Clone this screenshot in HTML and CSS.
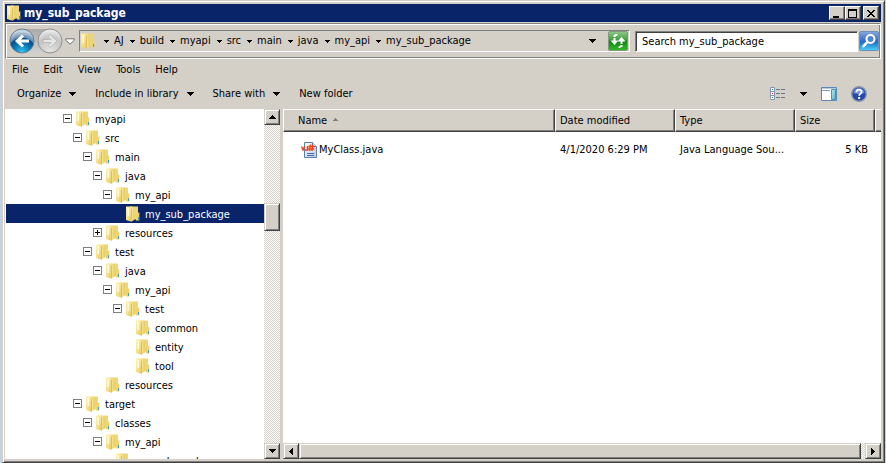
FILE: index.html
```html
<!DOCTYPE html>
<html lang="en">
<head>
<meta charset="utf-8">
<title>my_sub_package</title>
<link rel="stylesheet" href="styles.css">
</head>
<body>
<svg class="defs" aria-hidden="true">
  <defs>
    <linearGradient id="gold" x1="0" y1="0" x2="1" y2="1">
      <stop offset="0" stop-color="#fff3b0"/><stop offset=".5" stop-color="#f5e08a"/><stop offset="1" stop-color="#e3c352"/>
    </linearGradient>
    <linearGradient id="goldDark" x1="0" y1="0" x2="1" y2="0">
      <stop offset="0" stop-color="#cfae45"/><stop offset=".4" stop-color="#f3e08a"/><stop offset="1" stop-color="#e6cb62"/>
    </linearGradient>
    <symbol id="folder" viewBox="0 0 14 16">
      <path d="M4 .5h8v13H4z" fill="#ecd679"/>
      <path d="M10 7h2l1.300-1v8.500H10z" fill="#ecd46f"/>
      <path d="M0 .5h6.500v13.500L4.500 15.500 0 14z" fill="url(#gold)"/>
      <path d="M5 3L8.500 1v12.500L5 16z" fill="url(#goldDark)"/>
      <path d="M1.500 2H3v8H1.500z" fill="#fffbe0"/>
      <path d="M12 11h1v3h-1z" fill="#4a9fb0"/>
    </symbol>
    <radialGradient id="blueBall" cx=".5" cy=".95" r=".85">
      <stop offset="0" stop-color="#35c5ee"/><stop offset=".4" stop-color="#0878b4"/><stop offset=".68" stop-color="#0b4c83"/><stop offset=".7" stop-color="#5a87ad"/><stop offset="1" stop-color="#c7d5e0"/>
    </radialGradient>
    <radialGradient id="greyBall" cx=".5" cy=".9" r=".85">
      <stop offset="0" stop-color="#e2e2e0"/><stop offset=".65" stop-color="#c5c5c4"/><stop offset="1" stop-color="#ececec"/>
    </radialGradient>
    <linearGradient id="green" x1="0" y1="0" x2="0" y2="1">
      <stop offset="0" stop-color="#8fc98c"/><stop offset=".45" stop-color="#3f9c3e"/><stop offset=".5" stop-color="#0c8410"/><stop offset="1" stop-color="#37bb27"/>
    </linearGradient>
    <linearGradient id="searchBlue" x1="0" y1="0" x2="0" y2="1">
      <stop offset="0" stop-color="#86a9df"/><stop offset=".45" stop-color="#3b70cc"/><stop offset=".55" stop-color="#1c6dcf"/><stop offset="1" stop-color="#48d4f6"/>
    </linearGradient>
    <linearGradient id="pane" x1="0" y1="0" x2="1" y2="1">
      <stop offset="0" stop-color="#b9edf5"/><stop offset="1" stop-color="#4fb2cc"/>
    </linearGradient>
    <linearGradient id="page" x1="0" y1="0" x2="1" y2="1">
      <stop offset="0" stop-color="#fff"/><stop offset="1" stop-color="#b4c8e6"/>
    </linearGradient>
    <symbol id="down" viewBox="0 0 7 4"><path d="M0 0h7v1H6v1H5v1H4v1H3V3H2V2H1V1H0z"/></symbol>
    <symbol id="down-small" viewBox="0 0 5 3"><path d="M0 0h5v1H4v1H3v1H2V2H1V1H0z"/></symbol>
    <symbol id="left" viewBox="0 0 4 7"><path d="M4 0v7H3V6H2V5H1V4H0V3h1V2h1V1h1V0z"/></symbol>
  </defs>
</svg>
<main class="window">
  <header class="titlebar">
    <svg class="folder"><use href="#folder"/></svg>
    <h1 class="title">my_sub_package</h1>
    <div class="controls">
      <button class="caption" aria-label="Minimize"><svg viewBox="0 0 10 9"><path d="M1 7h6v2H1z"/></svg></button>
      <button class="caption" aria-label="Maximize"><svg viewBox="0 0 10 9"><path fill-rule="evenodd" d="M0 0h9v9H0zM1 2v6h7V2z"/></svg></button>
      <button class="caption close" aria-label="Close"><svg viewBox="0 0 10 9"><path d="M1 1h2v1h1v1h2V2h1V1h2v1H8v1H7v1H6v1h1v1h1v1h1v1H7V7H6V6H4v1H3v1H1V7h1V6h1V5h1V4H3V3H2V2H1z"/></svg></button>
    </div>
  </header>

  <nav class="navbar" aria-label="Address">
    <div class="travel">
      <button class="round" aria-label="Back"><svg viewBox="0 0 26 26"><circle cx="13" cy="13" r="12" fill="url(#blueBall)" stroke="#6d7d8b"/><path d="M13 6.500L6 13l7 6.500 2-2-3-3h8v-3h-8l3-3z" fill="#fff"/></svg></button>
      <button class="round" aria-label="Forward"><svg viewBox="0 0 26 26"><circle cx="13" cy="13" r="12" fill="url(#greyBall)" stroke="#8f8f8f"/><path d="M13 6.500l7 6.500-7 6.500-2-2 3-3H6v-3h8l-3-3z" fill="#e6e6e4" stroke="#aaa" stroke-width=".7"/></svg></button>
      <button class="history" aria-label="Recent locations"><svg viewBox="0 0 10 7"><path d="M.8.8h8.400v1.400L5 6.200.8 2.200z" fill="#fff" stroke="#6f6f6f"/></svg></button>
    </div>
    <div class="address">
      <svg class="folder"><use href="#folder"/></svg>
      <ol class="crumbs">
        <li><svg class="tick"><use href="#down-small"/></svg><a href="#">AJ</a></li>
        <li><svg class="tick"><use href="#down-small"/></svg><a href="#">build</a></li>
        <li><svg class="tick"><use href="#down-small"/></svg><a href="#">myapi</a></li>
        <li><svg class="tick"><use href="#down-small"/></svg><a href="#">src</a></li>
        <li><svg class="tick"><use href="#down-small"/></svg><a href="#">main</a></li>
        <li><svg class="tick"><use href="#down-small"/></svg><a href="#">java</a></li>
        <li><svg class="tick"><use href="#down-small"/></svg><a href="#">my_api</a></li>
        <li><svg class="tick"><use href="#down-small"/></svg><a href="#">my_sub_package</a></li>
      </ol>
      <button class="plain" aria-label="Previous locations"><svg class="arrow"><use href="#down"/></svg></button>
      <button class="square" aria-label="Refresh"><svg viewBox="0 0 20 20"><rect x=".5" y=".5" width="19" height="19" rx="1.500" fill="url(#green)" stroke="#7f9a7c"/><path d="M6.500 4v2M6.500 7v4.500M13.500 16v-2M13.500 13V9.500" stroke="#fff" stroke-width="2"/><path d="M2.500 9.500h8l-4 4.500zM9.500 10.500h8l-4-4.500z" fill="#fff"/><path d="M6.500 5q1-1.500 3-1M13.500 15q-1 1.500-3 1" fill="none" stroke="#fff" stroke-width="1.500"/></svg></button>
    </div>
    <form class="search" role="search">
      <input type="text" aria-label="Search" placeholder="Search my_sub_package">
      <button class="square" type="button" aria-label="Search"><svg viewBox="0 0 20 20"><rect x=".5" y=".5" width="19" height="19" rx="1.500" fill="url(#searchBlue)" stroke="#6f8fbd"/><circle cx="11.500" cy="8" r="4" fill="#4b83d6" stroke="#fff" stroke-width="2"/><path d="M8.500 11L4.500 15.200" stroke="#fff" stroke-width="2.600" stroke-linecap="round"/></svg></button>
    </form>
  </nav>

  <div class="menubar">
    <button>File</button><button>Edit</button><button>View</button><button>Tools</button><button>Help</button>
  </div>

  <div class="toolbar">
    <button>Organize<svg class="arrow"><use href="#down"/></svg></button>
    <button>Include in library<svg class="arrow"><use href="#down"/></svg></button>
    <button>Share with<svg class="arrow"><use href="#down"/></svg></button>
    <button>New folder</button>
    <div class="tools">
      <button aria-label="Change your view"><svg class="view" viewBox="0 0 16 14"><g fill="#fff" stroke="#8295ad"><path d="M.5.500h4v4h-4zM.5 4.500h4v4h-4zM.5 8.500h4v4h-4z"/></g><path d="M6 2h4v1H6zM11 2h4v1h-4zM6 6h4v1H6zM11 6h4v1h-4zM6 10h4v1H6zM11 10h4v1h-4z" fill="#66788e"/><path d="M2 2h1v1H2z" fill="#3a6ea5"/><path d="M2 6h1v1H2z" fill="#d02020"/><path d="M2 10h1v1H2z" fill="#3a8a5a"/></svg></button>
      <button aria-label="More view options"><svg class="arrow"><use href="#down"/></svg></button>
      <button aria-label="Preview pane"><svg class="preview" viewBox="0 0 16 14"><path d="M.5.500h15v13H.5z" fill="#fff" stroke="#5c87b2"/><path d="M1 1h14v1H1z" fill="#b8cbdf"/><path d="M1 3h8v1H1z" fill="#7b9cbc"/><path d="M10.500 2.500h4v10h-4z" fill="url(#pane)" stroke="#4a93b0"/></svg></button>
      <button aria-label="Help"><svg class="help" viewBox="0 0 16 16"><circle cx="8" cy="8" r="7.300" fill="#2449ad" stroke="#8c96a8" stroke-width="1.400"/><path d="M2.300 7a5.800 5.800 0 0 1 11.400 0Q8 9 2.300 7z" fill="#6f8fd8"/><path d="M5.500 6.200C5.500 2.800 10.600 3 10.500 6c0 1.800-2.400 1.900-2.400 3.800" fill="none" stroke="#fff" stroke-width="1.800"/><path d="M7.100 11h2v2h-2z" fill="#fff"/></svg></button>
    </div>
  </div>

  <div class="panes">
    <aside class="sidebar">
      <ul class="tree">
        <li class="d0"><button class="toggle" aria-label="Collapse"></button><svg class="folder"><use href="#folder"/></svg><span>myapi</span></li>
        <li class="d1"><button class="toggle" aria-label="Collapse"></button><svg class="folder"><use href="#folder"/></svg><span>src</span></li>
        <li class="d2"><button class="toggle" aria-label="Collapse"></button><svg class="folder"><use href="#folder"/></svg><span>main</span></li>
        <li class="d3"><button class="toggle" aria-label="Collapse"></button><svg class="folder"><use href="#folder"/></svg><span>java</span></li>
        <li class="d4"><button class="toggle" aria-label="Collapse"></button><svg class="folder"><use href="#folder"/></svg><span>my_api</span></li>
        <li class="d5 selected"><i class="leaf"></i><svg class="folder"><use href="#folder"/></svg><span>my_sub_package</span></li>
        <li class="d3"><button class="toggle plus" aria-label="Expand"></button><svg class="folder"><use href="#folder"/></svg><span>resources</span></li>
        <li class="d2"><button class="toggle" aria-label="Collapse"></button><svg class="folder"><use href="#folder"/></svg><span>test</span></li>
        <li class="d3"><button class="toggle" aria-label="Collapse"></button><svg class="folder"><use href="#folder"/></svg><span>java</span></li>
        <li class="d4"><button class="toggle" aria-label="Collapse"></button><svg class="folder"><use href="#folder"/></svg><span>my_api</span></li>
        <li class="d5"><button class="toggle" aria-label="Collapse"></button><svg class="folder"><use href="#folder"/></svg><span>test</span></li>
        <li class="d6"><i class="leaf"></i><svg class="folder"><use href="#folder"/></svg><span>common</span></li>
        <li class="d6"><i class="leaf"></i><svg class="folder"><use href="#folder"/></svg><span>entity</span></li>
        <li class="d6"><i class="leaf"></i><svg class="folder"><use href="#folder"/></svg><span>tool</span></li>
        <li class="d3"><i class="leaf"></i><svg class="folder"><use href="#folder"/></svg><span>resources</span></li>
        <li class="d1"><button class="toggle" aria-label="Collapse"></button><svg class="folder"><use href="#folder"/></svg><span>target</span></li>
        <li class="d2"><button class="toggle" aria-label="Collapse"></button><svg class="folder"><use href="#folder"/></svg><span>classes</span></li>
        <li class="d3"><button class="toggle" aria-label="Collapse"></button><svg class="folder"><use href="#folder"/></svg><span>my_api</span></li>
        <li class="d4"><i class="leaf"></i><svg class="folder"><use href="#folder"/></svg><span>my_sub_package</span></li>
      </ul>
      <div class="scroll vertical">
        <button aria-label="Scroll up"><svg class="arrow flip"><use href="#down"/></svg></button>
        <div class="track"><div class="thumb"></div></div>
        <button aria-label="Scroll down"><svg class="arrow"><use href="#down"/></svg></button>
      </div>
    </aside>
    <section class="files">
      <table>
        <colgroup><col><col class="wide"><col class="wide"><col class="size"><col class="rest"></colgroup>
        <thead>
          <tr><th class="name">Name<svg class="tick sort"><use href="#down-small"/></svg></th><th>Date modified</th><th>Type</th><th>Size</th><th class="end"></th></tr>
        </thead>
        <tbody>
          <tr>
            <td class="name"><div class="file"><svg class="java" viewBox="0 0 16 16"><path d="M3.500.500h8l4 4v11h-12z" fill="url(#page)" stroke="#5f80ae"/><path d="M11.500.500v4h4" fill="#fff" stroke="#5f80ae"/><path d="M6 11.500h7M6 13.500h7" stroke="#4469a5"/><path d="M.5 4.500L2 8l1.500-3.500M6.500 4v4H4M9.500 2.500L8.500 9M12 2.500L11 9M7.500 4.500h6M7.300 7h6" fill="none" stroke="#f5410f" stroke-width="1.400"/></svg>MyClass.java</div></td>
            <td>4/1/2020 6:29 PM</td><td>Java Language Sou...</td><td class="num">5 KB</td><td></td>
          </tr>
        </tbody>
      </table>
      <div class="scroll horizontal">
        <button aria-label="Scroll left"><svg class="side"><use href="#left"/></svg></button>
        <div class="track"><div class="thumb"></div></div>
        <button aria-label="Scroll right"><svg class="side flip"><use href="#left"/></svg></button>
      </div>
    </section>
  </div>
</main>
</body>
</html>
```
FILE: styles.css
```css
:root {
  --face: #d4d0c8;
  --navy: #0a246a;
  --shade: #808080;
  --dark: #404040;
}
* { box-sizing: border-box; }
body {
  margin: 0;
  padding: 0 1px 0 2px;
  background: #c3d1e5;
  color: #000;
  font: 11px/14px Tahoma, "DejaVu Sans Condensed", "Noto Sans", sans-serif;
}
button {
  margin: 0;
  padding: 0;
  border: 0;
  background: none;
  color: inherit;
  font: inherit;
}
svg { display: block; flex: none; }
.defs { position: absolute; width: 0; height: 0; }
.folder { width: 14px; height: 16px; }
.arrow { width: 7px; height: 4px; shape-rendering: crispEdges; }
.side { width: 4px; height: 7px; shape-rendering: crispEdges; }
.tick { width: 5px; height: 3px; shape-rendering: crispEdges; }
.flip { transform: rotate(180deg); }

.window {
  display: flex;
  flex-direction: column;
  height: 100vh;
  padding: 2px 2px 2px 1px;
  background: var(--face);
  border: 1px solid;
  border-color: var(--face) var(--dark) var(--dark) var(--face);
  box-shadow: inset 1px 1px #fff, inset -1px -1px var(--shade);
}
.titlebar {
  display: flex;
  align-items: center;
  gap: 3px;
  flex: none;
  height: 18px;
  margin: 1px;
  padding: 0 2px;
  background: var(--navy);
  color: #fff;
}
.title {
  flex: 1;
  margin: 0;
  font: bold 12px/16px Tahoma, "DejaVu Sans Condensed", sans-serif;
}
.controls { display: flex; }
.caption {
  display: grid;
  place-items: center;
  width: 16px;
  height: 14px;
  background: var(--face);
  border: 1px solid;
  border-color: #fff var(--dark) var(--dark) #fff;
  box-shadow: inset -1px -1px var(--shade);
}
.caption svg { width: 10px; height: 9px; shape-rendering: crispEdges; }
.close { margin-left: 2px; }

.navbar {
  display: flex;
  align-items: center;
  gap: 5px;
  flex: none;
  height: 36px;
  margin: 0 1px;
  padding: 0 1px 0 3px;
  border: 1px solid;
  border-color: var(--shade) #fff #fff var(--shade);
  box-shadow: inset 1px 1px #fff, inset -1px -1px var(--shade);
}
.travel {
  display: flex;
  align-items: center;
  gap: 2px;
  width: 65px;
  background: linear-gradient(#aaa, #d0d0d0) 10px 50% / 32px 24px no-repeat;
}
.round svg { width: 26px; height: 26px; }
.history svg { width: 10px; height: 7px; }
.address {
  display: flex;
  align-items: center;
  flex: 1;
  height: 22px;
  padding: 0 1px;
  border: 1px solid;
  border-color: var(--shade) #fff #fff var(--shade);
}
.crumbs {
  display: flex;
  flex: 1;
  margin: 0;
  padding: 0 0 0 3px;
  list-style: none;
}
.crumbs li { display: flex; align-items: center; }
.crumbs .tick { margin: 0 5px 0 6px; }
.crumbs a { color: inherit; text-decoration: none; }
.plain { padding: 0 12px; }
.square svg { width: 20px; height: 20px; }
.search { display: flex; align-items: center; width: 244px; gap: 1px; }
.search input {
  flex: 1;
  min-width: 0;
  height: 21px;
  padding: 0 6px;
  border: 1px solid;
  border-color: var(--shade) #fff #fff var(--shade);
  border-radius: 0;
  box-shadow: inset 1px 1px var(--dark);
  background: #fff;
  font: inherit;
}
.search input::placeholder { color: #000; opacity: 1; }

.menubar {
  display: flex;
  gap: 15px;
  flex: none;
  height: 21px;
  padding: 0 8px;
}
.toolbar {
  display: flex;
  align-items: center;
  gap: 19px;
  flex: none;
  height: 29px;
  padding: 0 15px 2px 13px;
}
.toolbar button { display: flex; align-items: center; gap: 8px; }
.tools { display: flex; align-items: center; gap: 14px; margin-left: auto; }
.view, .preview { width: 16px; height: 14px; }
.help { width: 16px; height: 16px; }

.panes {
  display: flex;
  gap: 3px;
  flex: 1;
  min-height: 0;
  margin: 0 1px 1px;
}
.sidebar { display: flex; flex: none; width: 275px; background: #fff; }
.tree {
  flex: 1;
  margin: 0;
  padding: 0 0 0 1px;
  overflow: hidden;
  list-style: none;
}
.tree li { display: flex; align-items: center; gap: 4px; height: 19px; }
.tree span { padding: 2px 0 0 1px; white-space: nowrap; }
.d0 { padding-left: 57px; }
.d1 { padding-left: 67px; }
.d2 { padding-left: 77px; }
.d3 { padding-left: 87px; }
.d4 { padding-left: 97px; }
.d5 { padding-left: 107px; }
.d6 { padding-left: 117px; }
.selected { background: var(--navy); color: #fff; }
.leaf { width: 9px; }
.toggle {
  width: 9px;
  height: 9px;
  border: 1px solid var(--shade);
  background: linear-gradient(#000, #000) center / 5px 1px no-repeat #fff;
}
.plus {
  background:
    linear-gradient(#000, #000) center / 5px 1px no-repeat,
    linear-gradient(#000, #000) center / 1px 5px no-repeat #fff;
}

.scroll {
  display: flex;
  flex: none;
  background: repeating-conic-gradient(var(--face) 0 25%, #fff 0 50%) 0 0 / 2px 2px;
}
.vertical { flex-direction: column; width: 16px; }
.horizontal { height: 16px; margin-top: auto; }
.scroll button, .thumb {
  background: var(--face);
  border: 1px solid;
  border-color: var(--face) var(--dark) var(--dark) var(--face);
  box-shadow: inset 1px 1px #fff, inset -1px -1px var(--shade);
}
.scroll button { display: grid; place-items: center; flex: none; width: 16px; height: 16px; }
.track { display: flex; flex: 1; }
.vertical .track { flex-direction: column; padding-top: 78px; }
.vertical .thumb { height: 28px; }
.horizontal .track { padding-right: 4px; }
.horizontal .thumb { flex: 1; }

.files { display: flex; flex-direction: column; flex: 1; min-width: 0; background: #fff; }
table { width: 100%; table-layout: fixed; border-collapse: separate; border-spacing: 0; }
.wide { width: 120px; }
.size { width: 80px; }
.rest { width: 6px; }
th {
  height: 23px;
  padding: 1px 5px 0 4px;
  background: var(--face);
  border: 1px solid;
  border-color: #fff var(--dark) var(--dark) #fff;
  box-shadow: inset -1px -1px var(--shade);
  font-weight: normal;
  text-align: left;
}
th.end { padding: 0; border-right: 0; box-shadow: inset 0 -1px var(--shade); }
th.name { padding-left: 14px; }
.sort { display: inline-block; margin-left: 6px; vertical-align: 3px; fill: var(--shade); transform: rotate(180deg); }
td { height: 35px; padding: 0 5px; white-space: nowrap; }
td:last-child { padding: 0; }
td.name { padding-left: 18px; }
.file { display: flex; align-items: center; gap: 2px; }
.java { width: 16px; height: 16px; }
.num { text-align: right; padding-right: 7px; }
```
